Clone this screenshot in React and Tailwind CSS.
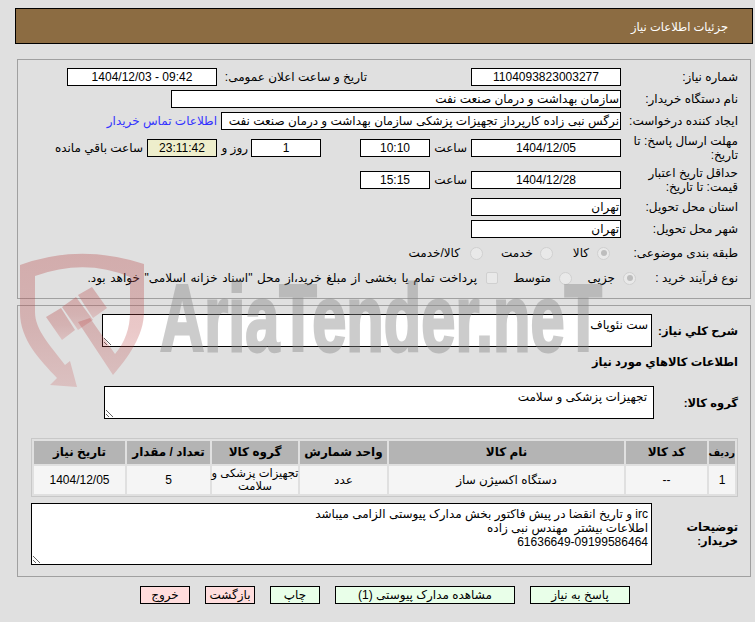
import React from "react";

const rows = [
  { w: "w-[26px]", head: "رديف", headSize: "text-[10px]", val: "1" },
  { w: "w-[81px]", head: "کد کالا", val: "--" },
  { w: "w-[235px]", head: "نام کالا", val: "دستگاه اکسیژن ساز" },
  { w: "w-[87px]", head: "واحد شمارش", val: "عدد" },
  { w: "w-[86px]", head: "گروه کالا", valSize: "text-[11.5px]", val: "تجهیزات پزشکی و\nسلامت" },
  { w: "w-[83px]", head: "تعداد / مقدار", val: "5" },
  { w: "w-[91px]", head: "تاریخ نیاز", val: "1404/12/05" },
];

const Box = ({ className = "", children, center }) => (
  <div
    className={`h-[18px] shrink-0 border border-black bg-white px-px leading-[16px] whitespace-nowrap overflow-hidden ${
      center ? "text-center" : "text-right"
    } ${className}`}
  >
    {children}
  </div>
);

const Label = ({ className = "w-[117px] pl-2", children }) => (
  <div className={`shrink-0 leading-[14px] ${className}`}>{children}</div>
);

const Radio = ({ checked }) => (
  <span className="relative inline-block w-[13px] h-[13px] shrink-0 rounded-full border border-[#d0d0d0] bg-[#e9e9e9]">
    {checked && (
      <span className="absolute inset-[2.5px] rounded-full bg-[#bdbdbd]" />
    )}
  </span>
);

const Area = ({ className, value }) => (
  <textarea
    readOnly
    dir="rtl"
    value={value}
    className={`shrink-0 block border border-black bg-white pl-px pt-[3px] leading-[14px] text-black outline-none ${className}`}
  />
);

const Btn = ({ w, red, children }) => (
  <button
    type="button"
    className={`h-[18px] ${w} border border-black leading-[16px] ${
      red ? "bg-[#ffdddd]" : "bg-[#e9ffe9]"
    }`}
  >
    {children}
  </button>
);

const Watermark = () => (
  <svg
    className="absolute left-0 top-0 pointer-events-none [direction:ltr]"
    width="755"
    height="622"
    viewBox="0 0 755 622"
  >
    <defs>
      <linearGradient id="shieldFade" x1="0" y1="0" x2="0" y2="1">
        <stop offset="0" stopColor="#b84848" stopOpacity="0.34" />
        <stop offset="0.55" stopColor="#b84848" stopOpacity="0.3" />
        <stop offset="1" stopColor="#c85050" stopOpacity="0.22" />
      </linearGradient>
    </defs>
    <g fill="url(#shieldFade)">
      <path d="M20 265Q80 243 144 264L144 312C144 335 128 358 113 375L78 322L90 318L115 354C125 342 130 328 130 312L130 277Q85 258 35 276L35 312C35 330 50 345 65 365L70 361L77 387L50 385L57 378C40 360 20 340 20 312Z" />
      <path d="M46 317L61 308L75 330L62 340Z" />
      <path d="M62 307L76 297L93 320L78 330Z" />
      <path d="M78 295L92 287L107 308L93 318Z" />
    </g>
    <g opacity="0.42">
      <text
        x="160"
        y="351"
        direction="ltr"
        textAnchor="start"
        fontSize="94"
        fontWeight="bold"
        textLength="442"
        lengthAdjust="spacingAndGlyphs"
        fontFamily="'Liberation Sans', sans-serif"
        fill="#888888"
        stroke="#888888"
        strokeWidth="3"
      >
        AriaTender.neT
      </text>
    </g>
  </svg>
);

export default function App() {
  return (
    <div
      dir="rtl"
      className="relative w-[755px] h-[622px] overflow-hidden bg-[#e0e0e0] pt-2 pl-[15px] pr-[2px] text-[12px] text-black font-['Liberation_Sans','DejaVu_Sans',sans-serif]"
    >
      <div className="h-[36px] border border-black bg-[#8c6c42] pr-[24px] leading-[37px] text-[11.5px] text-white">
        جزئیات اطلاعات نیاز
      </div>

      <div className="mt-[15px] mx-[2px] border border-[#a0a0a0] pt-2 pr-3 pb-[11px]">
        <div className="flex items-center h-[18px]">
          <Label>شماره نیاز:</Label>
          <Box center className="w-[150px]">1104093823003277</Box>
          <div className="mr-[104px] w-[150px] shrink-0 whitespace-nowrap">تاریخ و ساعت اعلان عمومی:</div>
          <Box center className="w-[150px]"><span dir="ltr">1404/12/03 - 09:42</span></Box>
        </div>

        <div className="flex items-center h-[18px] mt-1">
          <Label>نام دستگاه خریدار:</Label>
          <Box className="w-[450px]">سازمان بهداشت و درمان صنعت نفت</Box>
        </div>

        <div className="flex items-center h-[18px] mt-1">
          <Label>ایجاد کننده درخواست:</Label>
          <Box className="w-[400px]">نرگس نبی زاده کارپرداز تجهیزات پزشکی سازمان بهداشت و درمان صنعت نفت</Box>
          <a className="mr-1 whitespace-nowrap text-[#3333ff]">اطلاعات تماس خریدار</a>
        </div>

        <div className="flex items-center h-[28px] mt-1">
          <Label>مهلت ارسال پاسخ: تا تاریخ:</Label>
          <Box center className="w-[150px]">1404/12/05</Box>
          <div className="w-[41px] shrink-0 pr-[4px]">ساعت</div>
          <Box center className="w-[70px]">10:10</Box>
          <Box center className="w-[70px] mr-[39px]">1</Box>
          <div className="w-[34px] shrink-0 pr-[3px]">روز و</div>
          <Box center className="w-[70px] !bg-[#eeeecc]">23:11:42</Box>
          <div className="pr-1 whitespace-nowrap">ساعت باقي مانده</div>
        </div>

        <div className="flex items-center h-[28px] mt-1">
          <Label>حداقل تاریخ اعتبار قیمت: تا تاریخ:</Label>
          <Box center className="w-[150px]">1404/12/28</Box>
          <div className="w-[41px] shrink-0 pr-[4px]">ساعت</div>
          <Box center className="w-[70px]">15:15</Box>
        </div>

        <div className="flex items-center h-[18px] mt-1">
          <Label>استان محل تحویل:</Label>
          <Box className="w-[150px]">تهران</Box>
        </div>

        <div className="flex items-center h-[18px] mt-1">
          <Label>شهر محل تحویل:</Label>
          <Box className="w-[150px]">تهران</Box>
        </div>

        <div className="flex items-center h-[18px] mt-[6px] whitespace-nowrap">
          <Label className="w-[128px] pl-2">طبقه بندی موضوعی:</Label>
          <Radio checked />
          <span className="mr-[8px] w-[36px] shrink-0">کالا</span>
          <Radio />
          <span className="mr-[7px] w-[50px] shrink-0">خدمت</span>
          <Radio />
          <span className="mr-[10px] [word-spacing:1px] tracking-[0.6px]">کالا/خدمت</span>
        </div>

        <div className="flex items-center h-[18px] mt-[7px] whitespace-nowrap">
          <Label className="w-[102px] pl-2">نوع فرآیند خرید :</Label>
          <Radio checked />
          <span className="mr-[8px] w-[43px] shrink-0">جزیی</span>
          <Radio />
          <span className="mr-[8px] w-[53px] shrink-0">متوسط</span>
          <span className="w-[12px] h-[12px] shrink-0 rounded-[2px] border border-[#d0d0d0] bg-[#e9e9e9]" />
          <span className="mr-[9px] [word-spacing:1.3px]">
            پرداخت تمام یا بخشی از مبلغ خرید،از محل "اسناد خزانه اسلامی" خواهد بود.
          </span>
        </div>
      </div>

      <div className="mt-[6px] mx-[2px] border border-[#a0a0a0] pt-2 pr-3 pb-[11px]">
        <div className="flex items-center">
          <Label className="w-[86px] font-bold text-[11.5px] whitespace-nowrap">شرح کلي نياز:</Label>
          <Area className="w-[550px] h-[33px] pr-[3px]" value="ست نئوپاف" />
        </div>

        <div className="mt-2 h-[14px] leading-[14px] font-bold text-[11.5px] whitespace-nowrap">
          اطلاعات كالاهاي مورد نياز
        </div>

        <div className="flex items-center mt-[17px]">
          <Label className="w-[84px] font-bold text-[11.5px]">گروه کالا:</Label>
          <Area className="w-[550px] h-[33px] pr-[6px]" value="تجهیزات پزشکی و سلامت" />
        </div>

        <div className="mt-[19px] w-[707px] border border-[#c8c8c8] p-[2px]">
          <div className="flex gap-[2px]">
            {rows.map((r) => (
              <div
                key={r.head}
                className={`${r.w} ${r.headSize || ""} h-[23px] shrink-0 bg-[#b4b4b4] text-center font-bold leading-[23px] whitespace-nowrap`}
              >
                {r.head}
              </div>
            ))}
          </div>
          <div className="flex gap-[2px] mt-[2px]">
            {rows.map((r) => (
              <div
                key={r.head}
                className={`${r.w} ${r.valSize || ""} h-[28px] shrink-0 flex items-center justify-center bg-[#f5f5f5] text-center leading-[13px] whitespace-pre`}
              >
                {r.val}
              </div>
            ))}
          </div>
        </div>

        <div className="flex items-center mt-[6px]">
          <Label className="w-[86px] font-bold text-[11.5px] pl-5">توضیحات خریدار:</Label>
          <Area
            className="w-[621px] h-[62px] pr-[3px]"
            value={"irc و تاریخ انقضا در پیش فاکتور بخش مدارک پیوستی الزامی میباشد\nاطلاعات بیشتر  مهندس نبی زاده\n61636649-09199586464"}
          />
        </div>
      </div>

      <div className="mt-[9px] pr-[123px] flex gap-[15px]">
        <Btn w="w-[100px]">پاسخ به نیاز</Btn>
        <Btn w="w-[180px]">مشاهده مدارک پیوستی (1)</Btn>
        <Btn w="w-[50px]">چاپ</Btn>
        <Btn w="w-[50px]" red>بازگشت</Btn>
        <Btn w="w-[50px]" red>خروج</Btn>
      </div>

      <Watermark />
    </div>
  );
}
